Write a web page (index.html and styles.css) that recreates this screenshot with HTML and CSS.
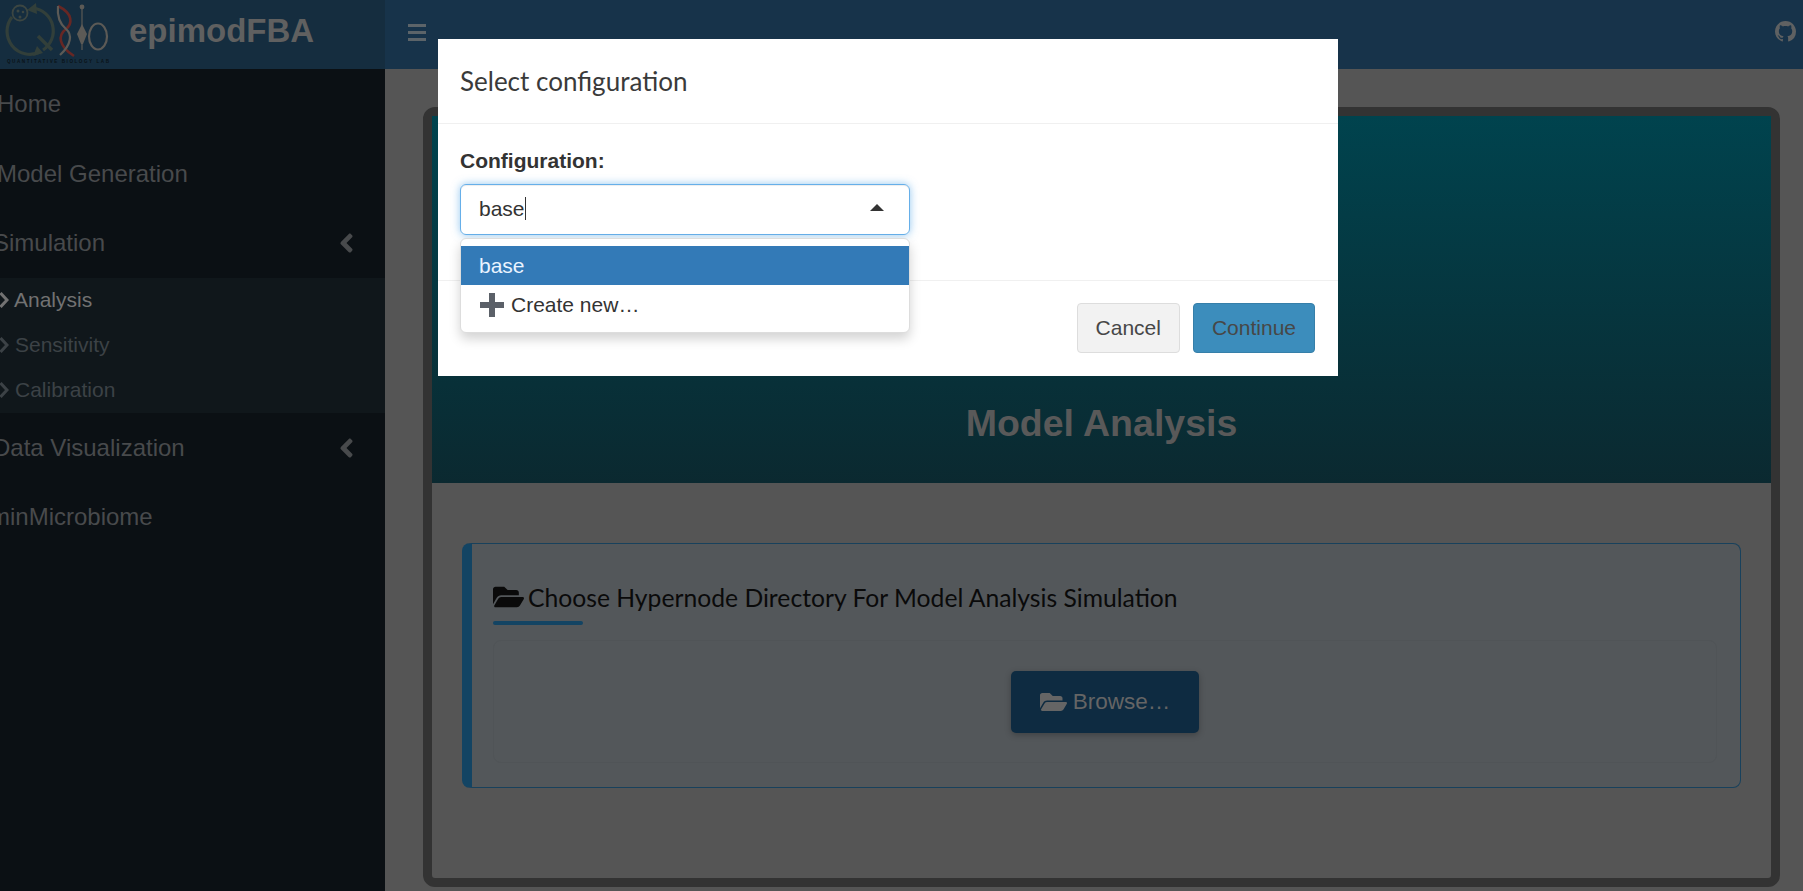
FILE: index.html
```html
<!DOCTYPE html>
<html lang="en">
<head>
  <meta charset="UTF-8">
  <meta name="viewport" content="width=device-width, initial-scale=1.0">
  <title>epimodFBA</title>
  <link rel="stylesheet" href="styles.css">
</head>
<body>
  <header class="top-bar">
    <div class="brand">
      <svg class="brand-logo" viewBox="0 0 112 66" width="112" height="66">
        <path d="M33 8 A23 23 0 0 1 43 50" fill="none" stroke="#323f3a" stroke-width="3.2"/>
        <path d="M40 52 A23 23 0 0 1 12 17" fill="none" stroke="#323f3a" stroke-width="3.2"/>
        <path d="M38 36 L52 50" stroke="#323f3a" stroke-width="3.6"/>
        <path d="M27 10 L36 3 L37 14 Z M37 46 L43 53 L33 56 Z" fill="#323f3a"/>
        <circle cx="20" cy="13" r="7.5" fill="#152d3f" stroke="#3c4642" stroke-width="1.8"/>
        <circle cx="18" cy="11" r="1.5" fill="#3c4642"/>
        <circle cx="23" cy="12" r="1.3" fill="#3c4642"/>
        <circle cx="20" cy="17" r="1.5" fill="#3c4642"/>
        <path d="M58 6 C74 14 72 24 66 29 C58 35 58 46 74 56" fill="none" stroke="#672724" stroke-width="2.6"/>
        <path d="M58 6 C57 16 60 24 66 29 C72 34 72 44 60 55" fill="none" stroke="#5c5a56" stroke-width="2.2"/>
        <path d="M82 6 L82 50" stroke="#5c5a56" stroke-width="1.2"/>
        <circle cx="82" cy="7" r="2.4" fill="#5c5a56"/>
        <path d="M82 24 L87 34 L83 44 L81 44 L77 34 Z" fill="#5c5a56"/>
        <ellipse cx="98" cy="36.5" rx="9" ry="13" fill="none" stroke="#5c5a56" stroke-width="2.2"/>
        <text x="7" y="63" class="brand-logo-text">QUANTITATIVE BIOLOGY LAB</text>
      </svg>
      <span class="brand-name">epimodFBA</span>
    </div>
    <div class="nav-bar">
      <div class="burger"><span></span><span></span><span></span></div>
      <svg class="github" viewBox="0 0 16 16" width="21" height="21">
        <path d="M8 0C3.58 0 0 3.58 0 8c0 3.54 2.29 6.53 5.47 7.59.4.07.55-.17.55-.38 0-.19-.01-.82-.01-1.49-2.01.37-2.53-.49-2.69-.94-.09-.23-.48-.94-.82-1.13-.28-.15-.68-.52-.01-.53.63-.01 1.08.58 1.23.82.72 1.21 1.87.87 2.33.66.07-.52.28-.87.51-1.07-1.78-.2-3.64-.89-3.64-3.95 0-.87.31-1.59.82-2.15-.08-.2-.36-1.02.08-2.12 0 0 .67-.21 2.2.82.64-.18 1.32-.27 2-.27.68 0 1.36.09 2 .27 1.53-1.04 2.2-.82 2.2-.82.44 1.1.16 1.92.08 2.12.51.56.82 1.27.82 2.15 0 3.07-1.87 3.75-3.65 3.95.29.25.54.73.54 1.48 0 1.07-.01 1.93-.01 2.2 0 .21.15.46.55.38A8.013 8.013 0 0016 8c0-4.42-3.58-8-8-8z"/>
      </svg>
    </div>
  </header>

  <div class="page">
    <nav class="sidebar">
      <div class="menu-item"><span class="menu-home">Home</span></div>
      <div class="menu-item nudge"><span class="menu-model">Model Generation</span></div>
      <div class="menu-item">
        <span class="menu-sim">Simulation</span>
        <svg class="menu-angle" viewBox="0 0 256 512" width="15" height="30"><path d="M31.7 239l136-136c9.4-9.4 24.6-9.4 33.9 0l22.6 22.6c9.4 9.4 9.4 24.6 0 33.9L127.9 256l96.4 96.4c9.4 9.4 9.4 24.6 0 33.9L201.7 413c-9.4 9.4-24.6 9.4-33.9 0l-136-136c-9.5-9.4-9.5-24.6-.1-34z"/></svg>
      </div>
      <div class="submenu">
        <div class="sub-item active"><svg class="sub-icon" viewBox="0 0 10 16" width="10" height="16"><path d="M1.5 1 L8 8 L1.5 15"/></svg><span>Analysis</span></div>
        <div class="sub-item"><svg class="sub-icon" viewBox="0 0 10 16" width="10" height="16"><path d="M1.5 1 L8 8 L1.5 15"/></svg><span>Sensitivity</span></div>
        <div class="sub-item"><svg class="sub-icon" viewBox="0 0 10 16" width="10" height="16"><path d="M1.5 1 L8 8 L1.5 15"/></svg><span>Calibration</span></div>
      </div>
      <div class="menu-item nudge">
        <span class="menu-data">Data Visualization</span>
        <svg class="menu-angle" viewBox="0 0 256 512" width="15" height="30"><path d="M31.7 239l136-136c9.4-9.4 24.6-9.4 33.9 0l22.6 22.6c9.4 9.4 9.4 24.6 0 33.9L127.9 256l96.4 96.4c9.4 9.4 9.4 24.6 0 33.9L201.7 413c-9.4 9.4-24.6 9.4-33.9 0l-136-136c-9.5-9.4-9.5-24.6-.1-34z"/></svg>
      </div>
      <div class="menu-item"><span class="menu-micro">minMicrobiome</span></div>
    </nav>

    <main class="content">
      <div class="frame">
        <div class="hero"><h1>Model Analysis</h1></div>
        <section class="card">
          <h3 class="card-title">
            <svg class="folder" viewBox="0 0 576 512" width="31" height="28"><path d="M572.694 292.093L500.27 416.248A63.997 63.997 0 0 1 444.989 448H45.025c-18.523 0-30.064-20.093-20.731-36.093l72.424-124.155A64 64 0 0 1 152 256h399.964c18.523 0 30.064 20.093 20.73 36.093zM152 224h328v-48c0-26.51-21.49-48-48-48H272l-64-64H48C21.49 64 0 85.49 0 112v278.046l69.077-118.418C86.214 242.25 117.989 224 152 224z"/></svg>
            Choose Hypernode Directory For Model Analysis Simulation
          </h3>
          <div class="card-rule"></div>
          <div class="card-body">
            <button class="browse">
              <svg class="folder" viewBox="0 0 576 512" width="27" height="24"><path d="M572.694 292.093L500.27 416.248A63.997 63.997 0 0 1 444.989 448H45.025c-18.523 0-30.064-20.093-20.731-36.093l72.424-124.155A64 64 0 0 1 152 256h399.964c18.523 0 30.064 20.093 20.73 36.093zM152 224h328v-48c0-26.51-21.49-48-48-48H272l-64-64H48C21.49 64 0 85.49 0 112v278.046l69.077-118.418C86.214 242.25 117.989 224 152 224z"/></svg>
              Browse…
            </button>
          </div>
        </section>
      </div>
    </main>
  </div>

  <div class="modal">
    <div class="modal-header">Select configuration</div>
    <div class="modal-body">
      <label class="field-label">Configuration:</label>
      <div class="select-box">
        <span class="select-value">base</span><span class="select-cursor"></span>
        <span class="select-caret"></span>
      </div>
      <div class="select-menu">
        <div class="select-option selected">base</div>
        <div class="select-option">
          <svg class="plus" viewBox="0 0 24 24" width="24" height="24"><path d="M9 0h6v9h9v6h-9v9H9v-9H0V9h9z"/></svg>
          Create new…
        </div>
      </div>
    </div>
    <div class="modal-footer">
      <button class="btn btn-cancel">Cancel</button>
      <button class="btn btn-continue">Continue</button>
    </div>
  </div>
</body>
</html>
```

FILE: styles.css
```css
* {
  box-sizing: border-box;
}

html,
body {
  margin: 0;
  height: 891px;
  overflow: hidden;
}

body {
  font-family: "Liberation Sans", Arial, sans-serif;
  font-size: 21px;
  color: #333;
  background-color: #555;
}

/* top bar */
.top-bar {
  display: flex;
  height: 69px;
}

.brand {
  display: flex;
  align-items: flex-start;
  width: 385px;
  background-color: #152d3f;
}

.brand-logo {
  flex: none;
}

.brand-logo-text {
  font-family: "Liberation Sans", Arial, sans-serif;
  font-size: 4.6px;
  font-weight: bold;
  letter-spacing: 1.55px;
  fill: #0a1318;
}

.brand-name {
  margin: 12px 0 0 17px;
  font-size: 33px;
  font-weight: bold;
  color: #606060;
}

.nav-bar {
  flex: 1;
  display: flex;
  align-items: center;
  justify-content: space-between;
  padding: 0 7px 0 23px;
  background-color: #17334a;
}

.burger {
  display: flex;
  flex-direction: column;
  gap: 4px;
  width: 18px;
  margin-top: -5px;
}

.burger span {
  height: 3px;
  background-color: #5c6469;
}

.github {
  fill: #5f6162;
  margin-top: -7px;
}

/* sidebar */
.page {
  display: flex;
  height: 822px;
}

.sidebar {
  width: 385px;
  flex: none;
  background-color: #0b1014;
  overflow: hidden;
  color: #484a4c;
  font-size: 24px;
}

.menu-item {
  display: flex;
  align-items: center;
  justify-content: space-between;
  height: 69.5px;
  padding-right: 31px;
  white-space: nowrap;
}

.menu-item.nudge {
  padding-top: 2px;
}

.menu-home,
.menu-model {
  margin-left: -3px;
}

.menu-sim,
.menu-data {
  margin-left: -7px;
}

.menu-micro {
  margin-left: -10px;
}

.menu-angle {
  fill: #484a4c;
}

.submenu {
  height: 135px;
  background-color: #10171b;
  font-size: 21px;
  color: #3c4246;
}

.sub-item {
  display: flex;
  align-items: center;
  gap: 6px;
  height: 45px;
}

.sub-item.active {
  gap: 5px;
  color: #727272;
}

.sub-icon {
  flex: none;
  margin-left: -1px;
  fill: none;
  stroke: currentColor;
  stroke-width: 3;
}

/* main area */
.content {
  flex: 1;
  padding: 38px 23px 4px 38px;
}

.frame {
  height: 780px;
  border: 9px solid #333;
  border-radius: 12px;
  background-color: #555;
}

.hero {
  display: flex;
  align-items: flex-end;
  justify-content: center;
  height: 367px;
  padding-bottom: 39px;
  background: linear-gradient(to bottom, #00434e, #0b2930);
}

.hero h1 {
  margin: 0;
  font-size: 37.5px;
  line-height: 42px;
  color: #595959;
}

.card {
  margin: 60px 30px 0;
  height: 245px;
  padding: 0 23px 0 21px;
  background-color: #53575a;
  border: 1px solid #18415c;
  border-left: 10px solid #134463;
  border-radius: 8px;
}

.card-title {
  display: flex;
  align-items: center;
  gap: 4px;
  margin: 37px 0 0;
  height: 32px;
  font-family: Lato, "Liberation Sans", sans-serif;
  font-size: 24.7px;
  font-weight: normal;
  color: #0a0a0a;
}

.folder {
  flex: none;
  fill: currentColor;
}

.card-rule {
  width: 90px;
  height: 4px;
  margin-top: 8px;
  background-color: #134463;
  border-radius: 2px;
}

.card-body {
  display: flex;
  justify-content: center;
  height: 123px;
  margin-top: 15px;
  padding-top: 30px;
  border: 1px solid #505457;
  border-radius: 8px;
}

.browse {
  display: flex;
  align-items: center;
  gap: 6px;
  height: 62px;
  padding: 0 29px;
  font-family: "Liberation Sans", Arial, sans-serif;
  font-size: 22.5px;
  color: #656565;
  background-color: #0e2b41;
  border: none;
  border-radius: 5px;
  box-shadow: 0 2px 6px rgba(0, 0, 0, 0.25);
}

/* modal, sits over the dimmed page */
.modal {
  position: fixed;
  top: 39px;
  left: 438px;
  width: 900px;
  height: 337px;
  background-color: #fff;
}

.modal-header {
  height: 85px;
  padding: 22px 22px 0;
  font-family: Lato, "Liberation Sans", sans-serif;
  font-size: 26px;
  line-height: 40px;
  color: #3a3a3a;
  border-bottom: 1px solid #f0f0f0;
}

.modal-body {
  position: relative;
  height: 157px;
  padding: 25px 22px 0;
  border-bottom: 1px solid #f0f0f0;
}

.field-label {
  display: block;
  font-weight: bold;
  line-height: 24px;
}

.select-box {
  display: flex;
  align-items: center;
  width: 450px;
  height: 51px;
  margin-top: 11px;
  padding: 0 18px 2px;
  border: 1px solid #66afe9;
  border-radius: 6px;
  box-shadow: inset 0 1px 1px rgba(0, 0, 0, 0.075), 0 0 8px rgba(102, 175, 233, 0.7);
}

.select-cursor {
  width: 1px;
  height: 23px;
  background-color: #333;
}

.select-caret {
  margin: 0 7px 3px auto;
  border-left: 7px solid transparent;
  border-right: 7px solid transparent;
  border-bottom: 7px solid #333;
}

.select-menu {
  position: absolute;
  top: 114px;
  left: 22px;
  width: 450px;
  height: 95px;
  padding-top: 7px;
  background-color: #fff;
  border: 1px solid #ddd;
  border-radius: 6px;
  box-shadow: 0 6px 12px rgba(0, 0, 0, 0.175);
}

.select-option {
  display: flex;
  align-items: center;
  gap: 7px;
  height: 39px;
  padding: 0 18px;
}

.select-option.selected {
  color: #eaf4ff;
  background-color: #337ab7;
}

.plus {
  margin-left: 1px;
  fill: #5b6068;
}

.modal-footer {
  display: flex;
  justify-content: flex-end;
  gap: 13px;
  padding: 22px 23px 0;
}

.btn {
  height: 50px;
  padding: 0 18px;
  font-family: "Liberation Sans", Arial, sans-serif;
  font-size: 21px;
  color: #474747;
  border-radius: 4px;
}

.btn-cancel {
  background-color: #f2f2f2;
  border: 1px solid #ddd;
}

.btn-continue {
  background-color: #3c8dbc;
  border: 1px solid #367fa9;
}
```
